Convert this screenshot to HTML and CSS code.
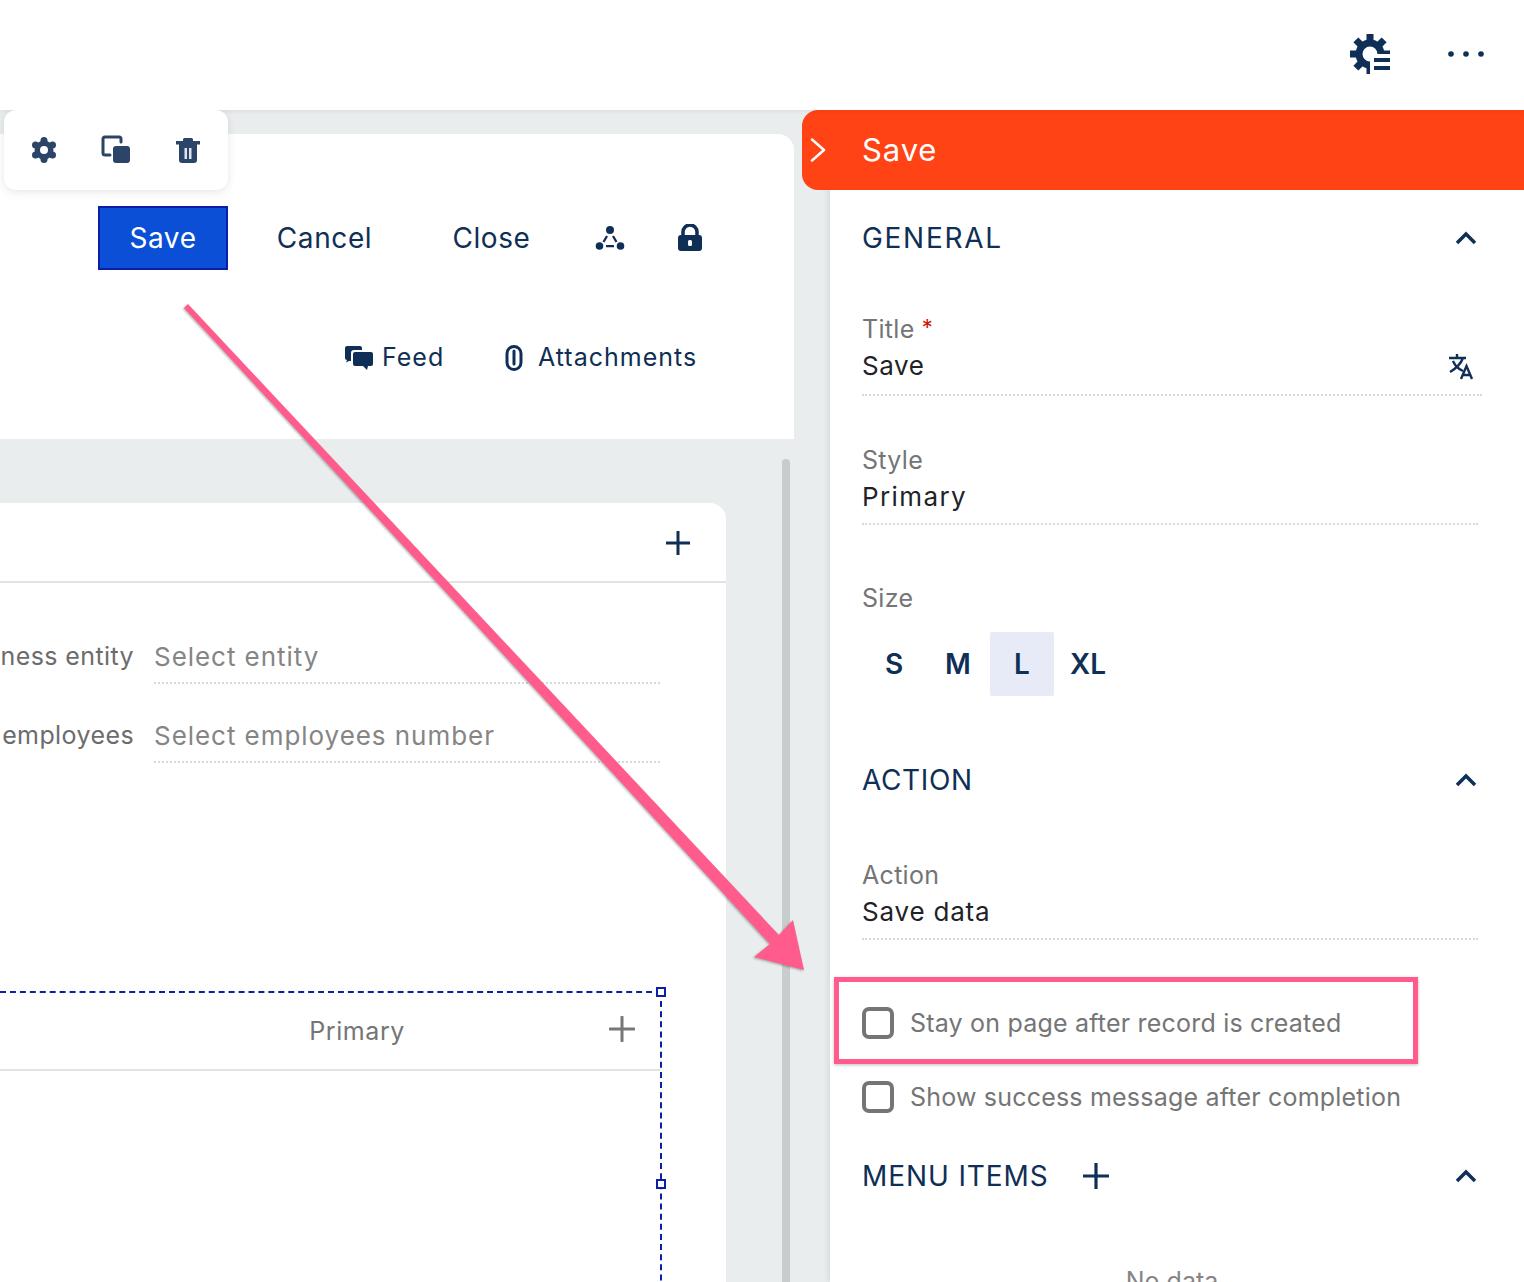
FILE: index.html
```html
<!DOCTYPE html>
<html lang="en">
<head>
    <meta charset="UTF-8">
    <meta name="viewport" content="width=device-width, initial-scale=1.0">
    <title>Save button settings</title>
    <link rel="stylesheet" href="styles.css">
</head>
<body>
    <header class="topbar">
        <button class="top-icon">
            <svg width="40" height="40" viewBox="0 0 40 40">
                <circle cx="20" cy="20" r="11" fill="none" stroke="#0f2f56" stroke-width="7"/>
                <g fill="#0f2f56">
                    <rect x="16.5" y="0" width="7" height="8"/>
                    <rect x="16.5" y="0" width="7" height="8" transform="rotate(45 20 20)"/>
                    <rect x="16.5" y="0" width="7" height="8" transform="rotate(90 20 20)"/>
                    <rect x="16.5" y="0" width="7" height="8" transform="rotate(180 20 20)"/>
                    <rect x="16.5" y="0" width="7" height="8" transform="rotate(225 20 20)"/>
                    <rect x="16.5" y="0" width="7" height="8" transform="rotate(270 20 20)"/>
                    <rect x="16.5" y="0" width="7" height="8" transform="rotate(315 20 20)"/>
                </g>
                <rect x="20" y="20" width="20" height="20" fill="#fff"/>
                <rect x="24" y="24" width="16" height="4" fill="#0f2f56"/>
                <rect x="24" y="32" width="16" height="4" fill="#0f2f56"/>
            </svg>
        </button>
        <button class="top-icon">
            <svg width="40" height="12" viewBox="0 0 40 12" fill="#0f2f56">
                <circle cx="5" cy="6" r="2.8"/><circle cx="20" cy="6" r="2.8"/><circle cx="35" cy="6" r="2.8"/>
            </svg>
        </button>
    </header>

    <main class="main">
        <section class="canvas">
            <div class="float-tools">
                <svg width="24" height="26" viewBox="0 0 24 26">
                    <g fill="#2c4468">
                        <circle cx="12" cy="3.5" r="3.500"/><circle cx="12" cy="22.500" r="3.500"/>
                        <circle cx="3.500" cy="8" r="3.500"/><circle cx="20.500" cy="8" r="3.500"/>
                        <circle cx="3.500" cy="18" r="3.500"/><circle cx="20.500" cy="18" r="3.500"/>
                        <circle cx="12" cy="13" r="9.500"/>
                    </g>
                    <circle cx="12" cy="13" r="4" fill="#fff"/>
                </svg>
                <svg width="30" height="30" viewBox="0 0 30 30">
                    <path d="M9 20H4a2 2 0 0 1-2-2V4a2 2 0 0 1 2-2h14a2 2 0 0 1 2 2v3" fill="none" stroke="#2c4468" stroke-width="3" stroke-linecap="round"/>
                    <rect x="12" y="11" width="17" height="17" rx="3" fill="#2c4468"/>
                </svg>
                <svg width="24" height="26" viewBox="0 0 24 26">
                    <path d="M0 4h7V2.500Q7 1 8.500 1h7Q17 1 17 2.500V4h7v3.500H0z" fill="#2c4468"/>
                    <path d="M3 7h18v16a3 3 0 0 1-3 3H6a3 3 0 0 1-3-3z" fill="#2c4468"/>
                    <rect x="8.500" y="11" width="2.500" height="11" fill="#dfe3ea"/>
                    <rect x="13" y="11" width="2.500" height="11" fill="#dfe3ea"/>
                </svg>
            </div>

            <div class="record-head">
                <div class="actions">
                    <button class="btn btn-primary">Save</button>
                    <button class="btn btn-cancel">Cancel</button>
                    <button class="btn btn-close">Close</button>
                    <button class="btn-icon">
                        <svg width="30" height="26" viewBox="0 0 30 26" fill="#0f2f56">
                            <circle cx="15" cy="5" r="4"/><circle cx="4.500" cy="21" r="3.800"/><circle cx="25.500" cy="21" r="3.800"/>
                            <path d="M11 10.500l2 1-3.500 6-2-1zM19 10.500l-2 1 3.500 6 2-1zM11 20h8v2.200h-8z"/>
                        </svg>
                    </button>
                    <button class="btn-icon">
                        <svg width="26" height="28" viewBox="0 0 26 28">
                            <path d="M6 13V8a7 7 0 0 1 14 0v5" fill="none" stroke="#0f2f56" stroke-width="3.500"/>
                            <rect x="1" y="11" width="24" height="16" rx="3" fill="#0f2f56"/>
                            <rect x="11" y="16" width="4" height="6" rx="1.500" fill="#fff"/>
                        </svg>
                    </button>
                </div>
                <div class="record-tabs">
                    <span class="tab tab-feed">
                        <svg width="28" height="24" viewBox="0 0 28 24" fill="#0f2f56">
                            <path d="M2 0h13a2 2 0 0 1 2 2v2H9a3 3 0 0 0-3 3v8H4l-3 1.500L2 14a2 2 0 0 1-2-2V2a2 2 0 0 1 2-2z"/>
                            <path d="M10 6h16a2 2 0 0 1 2 2v10a2 2 0 0 1-2 2h-3l-1 4-4-4h-8a2 2 0 0 1-2-2V8a2 2 0 0 1 2-2z"/>
                        </svg>
                        Feed
                    </span>
                    <span class="tab tab-attach">
                        <svg width="18" height="26" viewBox="0 0 18 26" fill="none" stroke="#0f2f56" stroke-linecap="round">
                            <rect x="2" y="1.500" width="14" height="23" rx="7" stroke-width="3"/>
                            <path d="M9 6v13" stroke-width="3"/>
                        </svg>
                        Attachments
                    </span>
                </div>
            </div>

            <div class="form-card">
                <div class="form-card-head">
                    <svg class="plus" width="26" height="26" viewBox="0 0 26 26"><path d="M13 1v24M1 13h24" stroke="#0f2f56" stroke-width="3"/></svg>
                </div>
                <div class="field-rows">
                    <div class="field-row">
                        <div class="field-label">ness entity</div>
                        <div class="field-input">Select entity</div>
                    </div>
                    <div class="field-row">
                        <div class="field-label">employees</div>
                        <div class="field-input">Select employees number</div>
                    </div>
                </div>
                <div class="selected-box">
                    <span class="handle handle-top"></span>
                    <span class="handle handle-mid"></span>
                    <div class="selected-row">
                        <span class="selected-style">Primary</span>
                        <svg class="selected-plus" width="26" height="26" viewBox="0 0 26 26"><path d="M13 1v24M1 13h24" stroke="#777" stroke-width="3" stroke-linecap="round"/></svg>
                    </div>
                </div>
            </div>
            <div class="scroll-thumb"></div>
        </section>

        <aside class="panel">
            <div class="panel-title">
                <svg width="16" height="24" viewBox="0 0 16 24"><path d="M2 1.500L14 12 2 22.500" fill="none" stroke="#fff" stroke-width="2.500" stroke-linecap="round" stroke-linejoin="round"/></svg>
                <span class="panel-title-text">Save</span>
            </div>
            <div class="panel-body">
                <div class="section-head section-general">
                    <span>GENERAL</span>
                    <svg class="chev" width="24" height="14" viewBox="0 0 24 14"><path d="M3 12L12 3l9 9" fill="none" stroke="#0f2f56" stroke-width="3.500"/></svg>
                </div>
                <div class="prop prop-title">
                    <div class="prop-label">Title <span class="req">*</span></div>
                    <div class="prop-value">
                        <span>Save</span>
                        <svg class="translate" width="24" height="26" viewBox="0 0 24 26" fill="none" stroke="#0f2f56" stroke-width="2.400">
                            <path d="M0 4h17M8 0v4M14 4Q11 12 1 18M4 7q3 7 10 10"/>
                            <path d="M12 25l5.500-13L23 25M14 21h7"/>
                        </svg>
                    </div>
                </div>
                <div class="prop prop-style">
                    <div class="prop-label">Style</div>
                    <div class="prop-value">Primary</div>
                </div>
                <div class="size-field">
                    <div class="prop-label">Size</div>
                    <div class="size-options">
                        <button class="size-btn">S</button>
                        <button class="size-btn">M</button>
                        <button class="size-btn selected">L</button>
                        <button class="size-btn">XL</button>
                    </div>
                </div>
                <div class="section-head section-action">
                    <span>ACTION</span>
                    <svg class="chev" width="24" height="14" viewBox="0 0 24 14"><path d="M3 12L12 3l9 9" fill="none" stroke="#0f2f56" stroke-width="3.500"/></svg>
                </div>
                <div class="prop prop-action">
                    <div class="prop-label">Action</div>
                    <div class="prop-value">Save data</div>
                </div>
                <div class="checks">
                    <label class="check-row"><span class="check-box"></span>Stay on page after record is created</label>
                    <label class="check-row"><span class="check-box"></span>Show success message after completion</label>
                </div>
                <div class="section-head section-menu">
                    <span class="menu-left">MENU ITEMS
                        <svg width="28" height="28" viewBox="0 0 28 28"><path d="M14 1v26M1 14h26" stroke="#0f2f56" stroke-width="3.200"/></svg>
                    </span>
                    <svg class="chev" width="24" height="14" viewBox="0 0 24 14"><path d="M3 12L12 3l9 9" fill="none" stroke="#0f2f56" stroke-width="3.500"/></svg>
                </div>
                <div class="no-data">No data</div>
            </div>
        </aside>
    </main>

    <!-- annotation drawn over the screenshot -->
    <div class="note-box"></div>
    <svg class="note-arrow" width="1524" height="1282" viewBox="0 0 1524 1282">
        <polygon fill="#ff5c8d" points="184,308 188,304 779,935 793,920 804,970 754,957 770,944"/>
    </svg>
</body>
</html>
```

FILE: styles.css
```css
* {
    box-sizing: border-box;
}

html, body {
    margin: 0;
    padding: 0;
    height: 100%;
    overflow: hidden;
}

body {
    font-family: Inter, "Noto Sans", sans-serif;
    color: #0f2f56;
    background: #fff;
    width: 1524px;
    height: 1282px;
    position: relative;
}

button {
    font: inherit;
    color: inherit;
    background: none;
    border: none;
    padding: 0;
}

/* top bar */
.topbar {
    height: 110px;
    display: flex;
    align-items: center;
    justify-content: flex-end;
    gap: 56px;
    padding: 0 38px 2px 0;
    position: relative;
    z-index: 2;
    box-shadow: 0 1px 5px rgba(0, 0, 0, 0.08);
    background: #fff;
}

.top-icon {
    display: flex;
    align-items: center;
}

/* main area */
.main {
    display: flex;
    height: 1172px;
}

.canvas {
    width: 830px;
    background: #e9eded;
    position: relative;
    overflow: hidden;
    padding-top: 24px;
}

.float-tools {
    position: absolute;
    left: 4px;
    top: 0;
    width: 224px;
    height: 80px;
    background: #fff;
    border-radius: 12px;
    box-shadow: 0 2px 10px rgba(0, 0, 0, 0.1);
    display: flex;
    align-items: center;
    justify-content: space-between;
    padding: 0 28px;
    z-index: 3;
}

.record-head {
    width: 794px;
    height: 305px;
    background: #fff;
    border-top-right-radius: 16px;
    padding: 72px 0 0 98px;
}

.actions {
    display: flex;
    align-items: center;
    gap: 17px;
    height: 64px;
    font-size: 28px;
}

.btn {
    height: 64px;
    letter-spacing: 0.6px;
}

.btn-primary {
    width: 130px;
    background: #0a4fd6;
    border: 2px solid #0a1fa8;
    color: #fff;
}

.btn-cancel {
    width: 159px;
}

.btn-close {
    width: 141px;
}

.btn-icon {
    width: 64px;
    height: 64px;
    margin-left: -1px;
    display: flex;
    align-items: center;
    justify-content: center;
}

.record-tabs {
    display: flex;
    margin-top: 65px;
    padding-left: 247px;
    font-size: 25px;
    letter-spacing: 1px;
}

.tab {
    display: flex;
    align-items: center;
    height: 44px;
}

.tab svg {
    margin-top: 2px;
}

.tab-feed {
    width: 160px;
    gap: 9px;
}

.tab-attach {
    gap: 15px;
}

.form-card {
    width: 726px;
    height: 900px;
    margin-top: 64px;
    background: #fff;
    border-top-right-radius: 16px;
}

.form-card-head {
    height: 80px;
    border-bottom: 2px solid #e3e3e3;
    display: flex;
    align-items: center;
    justify-content: flex-end;
    padding: 2px 35px 0 0;
}

.field-rows {
    padding-top: 22px;
}

.field-row {
    display: flex;
    height: 79px;
    gap: 20px;
    align-items: flex-end;
}

.field-label {
    width: 134px;
    height: 78px;
    padding-top: 35px;
    text-align: right;
    white-space: nowrap;
    font-size: 25px;
    letter-spacing: 0.4px;
    color: #6c6c6c;
}

.field-input {
    width: 506px;
    height: 79px;
    padding-top: 36px;
    font-size: 26px;
    letter-spacing: 0.95px;
    color: #858585;
    border-bottom: 2px dotted #d9d9d9;
}

.selected-box {
    width: 662px;
    height: 340px;
    margin-top: 228px;
    border-top: 2px dashed #0a1fa8;
    border-right: 2px dashed #0a1fa8;
    position: relative;
}

.handle {
    position: absolute;
    right: -6px;
    width: 10px;
    height: 10px;
    background: #fff;
    border: 2px solid #0a1fa8;
}

.handle-top {
    top: -6px;
}

.handle-mid {
    top: 186px;
}

.selected-row {
    height: 78px;
    border-bottom: 2px solid #e3e3e3;
    display: flex;
    align-items: center;
    justify-content: flex-end;
    gap: 204px;
    padding-right: 25px;
    font-size: 25px;
    letter-spacing: 0.6px;
    color: #757575;
}

.selected-plus {
    margin-bottom: 5px;
}

.scroll-thumb {
    position: absolute;
    left: 782px;
    top: 349px;
    width: 8px;
    height: 840px;
    border-radius: 4px;
    background: #c8cccc;
}

/* settings panel */
.panel {
    flex: 1;
    position: relative;
    z-index: 1;
    background: #fff;
    box-shadow: -2px 0 6px rgba(0, 0, 0, 0.08);
}

.panel-title {
    height: 80px;
    margin-left: -28px;
    background: #ff4314;
    border-radius: 16px 0 0 16px;
    color: #fff;
    display: flex;
    align-items: center;
    gap: 36px;
    padding-left: 8px;
    font-size: 31px;
    letter-spacing: 0.9px;
    position: relative;
}

.panel-title-text {
    margin-bottom: 2px;
}

.panel-body {
    padding: 0 46px 0 32px;
}

.section-head {
    height: 96px;
    display: flex;
    align-items: center;
    justify-content: space-between;
    font-size: 28px;
    letter-spacing: 0.65px;
}

.section-general {
    letter-spacing: 1.7px;
}

.section-action {
    margin-top: 36px;
}

.section-menu {
    height: 92px;
    letter-spacing: 0.9px;
}

.menu-left {
    display: flex;
    align-items: center;
    gap: 33px;
}

.prop {
    border-bottom: 2px dotted #d9d9d9;
}

.prop-label {
    height: 36px;
    line-height: 36px;
    font-size: 25px;
    color: #757575;
    letter-spacing: 0.3px;
}

.prop-value {
    height: 36px;
    line-height: 36px;
    margin-top: 1px;
    font-size: 26px;
    letter-spacing: 0.6px;
    color: #1f2328;
    display: flex;
    align-items: center;
    justify-content: space-between;
}

.req {
    color: #d0160c;
    font-size: 22px;
    line-height: 0;
    vertical-align: 3px;
}

.translate {
    margin: 2px 9px 0 0;
}

.prop-title {
    margin-top: 25px;
    margin-right: -4px;
    padding-bottom: 10px;
}

.prop-style {
    margin-top: 46px;
    padding-bottom: 8px;
}

.prop-style .prop-value {
    letter-spacing: 1.4px;
}

.prop-action {
    margin-top: 29px;
    padding-bottom: 8px;
}

.prop-action .prop-value {
    letter-spacing: 0.8px;
}

.size-field {
    margin-top: 55px;
}

.size-options {
    display: flex;
    margin-top: 16px;
}

.size-btn {
    width: 64px;
    height: 64px;
    font-size: 28px;
    font-weight: 600;
    border-radius: 2px;
}

.size-btn:last-child {
    width: 68px;
}

.size-btn.selected {
    background: #e6ebf7;
}

.checks {
    margin-top: 50px;
    display: flex;
    flex-direction: column;
    gap: 8px;
}

.check-row {
    height: 66px;
    display: flex;
    align-items: center;
    gap: 16px;
    font-size: 25px;
    letter-spacing: 0.2px;
    color: #757575;
    white-space: nowrap;
}

.check-box {
    width: 32px;
    height: 32px;
    border: 4px solid #757575;
    border-radius: 7px;
}

.no-data {
    margin-top: 41px;
    padding-left: 4px;
    height: 36px;
    line-height: 36px;
    text-align: center;
    font-size: 25px;
    color: #858585;
}

/* annotation */
.note-box {
    position: absolute;
    left: 834px;
    top: 977px;
    width: 584px;
    height: 87px;
    border: 5px solid #ff5c8d;
    box-shadow: 0 1px 3px rgba(0, 0, 0, 0.25);
    z-index: 5;
}

.note-arrow {
    position: absolute;
    left: 0;
    top: 0;
    z-index: 5;
    pointer-events: none;
    filter: drop-shadow(-1px 1px 1px rgba(0, 0, 0, 0.3));
}
```
